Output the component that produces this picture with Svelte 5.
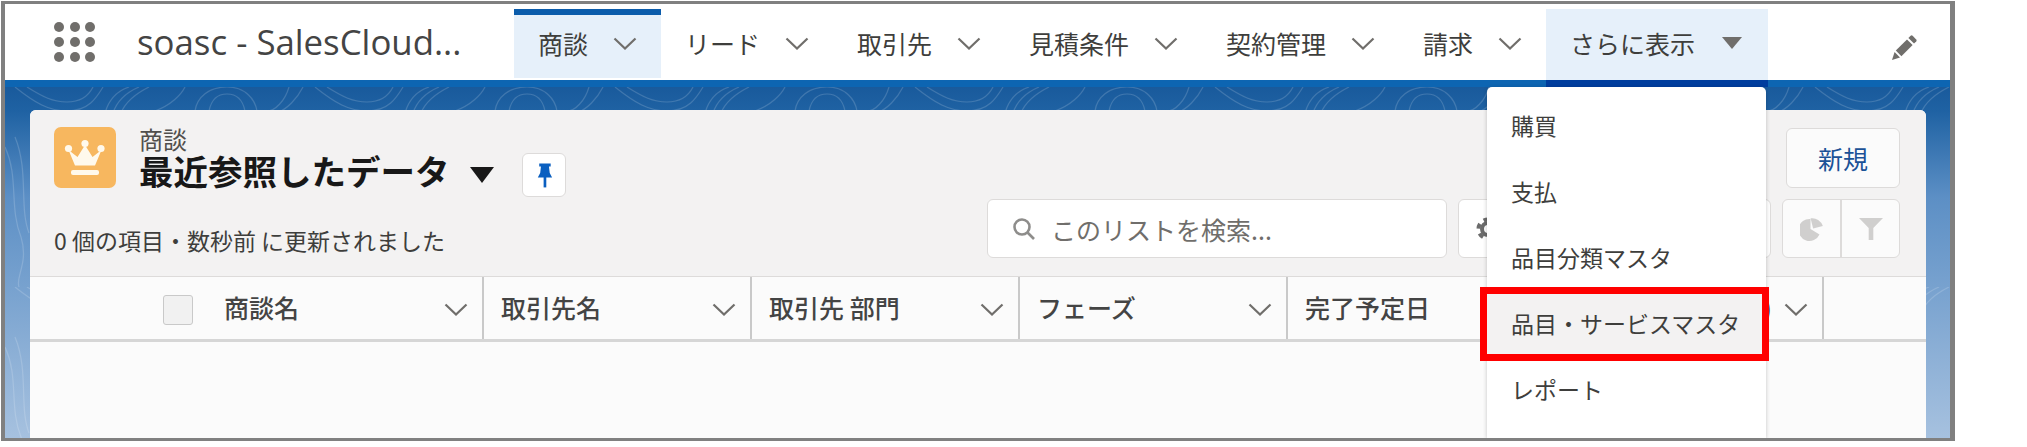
<script>
  const tabs = [
    { label: '商談', active: true },
    { label: 'リード' },
    { label: '取引先' },
    { label: '見積条件' },
    { label: '契約管理' },
    { label: '請求' }
  ];

  const columns = ['取引先名', '取引先 部門', 'フェーズ', '完了予定日'];

  const menuItems = ['購買', '支払', '品目分類マスタ', '品目・サービスマスタ', 'レポート'];
  const selectedItem = '品目・サービスマスタ';
</script>

{#snippet chevron()}
  <svg class="chevron" viewBox="0 0 24 13" aria-hidden="true">
    <path d="M1.5 1.5 L12 11.5 L22.5 1.5" />
  </svg>
{/snippet}

<div class="frame">
  <header class="topbar">
    <div class="launcher" aria-hidden="true">
      {#each Array(9) as _}
        <span></span>
      {/each}
    </div>
    <div class="app-name">soasc - SalesCloud...</div>
    <nav class="tabs">
      {#each tabs as tab}
        <div class="tab" class:active={tab.active}>
          <span>{tab.label}</span>
          {@render chevron()}
        </div>
      {/each}
      <div class="tab more">
        <span>さらに表示</span>
        <svg class="caret" viewBox="0 0 20 12" aria-hidden="true"><path d="M0 0 H20 L10 12 Z" /></svg>
      </div>
    </nav>
    <svg class="pencil" viewBox="0 0 28 28" aria-hidden="true">
      <path d="M2 26 L4.6 18 L10 23.4 Z" />
      <path d="M5.8 16.6 L17 5.4 L22.6 11 L11.4 22.2 Z" />
      <path d="M18.4 4 L20.6 1.8 A1.5 1.5 0 0 1 22.6 1.8 L26.2 5.4 A1.5 1.5 0 0 1 26.2 7.4 L24 9.6 Z" />
    </svg>
  </header>

  <main class="stage">
    <svg class="contours" aria-hidden="true">
      <defs>
        <pattern id="contour" width="300" height="200" patternUnits="userSpaceOnUse">
          <g fill="none" stroke="#fff" stroke-opacity="0.16" stroke-width="1.2">
            <path d="M10 0 C30 16 44 24 62 24 C84 24 92 10 98 0" />
            <path d="M22 0 C38 10 48 15 62 15 C76 15 84 8 88 0" />
            <path d="M100 26 C104 12 112 4 124 0 M108 26 C112 14 120 6 134 0 M116 26 C120 16 128 8 144 0" />
            <path d="M150 24 C166 18 176 8 180 0" />
            <path d="M190 24 C192 10 204 0 222 0 C240 0 250 12 252 24" />
            <path d="M204 24 C206 14 212 7 222 7 C232 7 238 14 240 24" />
            <path d="M262 24 C270 24 280 14 284 0 M272 26 C282 22 292 12 298 0" />
            <path d="M0 60 C14 90 4 120 16 150 C24 176 10 190 14 200" />
            <path d="M10 50 C24 84 14 120 24 146" />
          </g>
        </pattern>
      </defs>
      <rect width="100%" height="100%" fill="url(#contour)" />
    </svg>

    <section class="card">
      <div class="card-head">
        <div class="head-top">
          <div class="object-icon">
            <svg viewBox="0 0 62 61" aria-hidden="true">
              <circle cx="14.5" cy="21.5" r="3.6" />
              <circle cx="31" cy="16.5" r="3.6" />
              <circle cx="47" cy="21.5" r="3.6" />
              <path d="M14.5 23 L21 38.5 H41 L47.5 23 L38.5 30 L31 18 L23.5 30 Z" />
              <rect x="17" y="43" width="28" height="5" rx="2" />
            </svg>
          </div>
          <div class="titles">
            <div class="object-name">商談</div>
            <div class="title-row">
              <h1>最近参照したデータ</h1>
              <svg class="title-caret" viewBox="0 0 24 16" aria-hidden="true"><path d="M0 0 H24 L12 16 Z" /></svg>
              <button class="pin" aria-label="pin">
                <svg viewBox="0 0 44 44" aria-hidden="true">
                  <path d="M17 10 H29 V13 H27.2 L28 20 L30.5 24.5 H15.5 L18 20 L18.8 13 H17 Z" />
                  <rect x="21.6" y="24" width="2.8" height="11" />
                </svg>
              </button>
            </div>
          </div>
          <button class="new-btn">新規</button>
        </div>

        <div class="head-bottom">
          <div class="meta">0 個の項目・数秒前 に更新されました</div>
          <div class="search">
            <svg viewBox="0 0 24 24" aria-hidden="true">
              <circle cx="10" cy="10" r="7.5" />
              <path d="M15.5 15.5 L22 22" />
            </svg>
            <span>このリストを検索...</span>
          </div>
          <div class="settings">
            <svg viewBox="0 0 24 24" aria-hidden="true">
              <circle cx="12" cy="12" r="6" />
              <circle class="teeth" cx="12" cy="12" r="9.5" />
            </svg>
          </div>
          <div class="chart-group">
            <div class="tool">
              <svg viewBox="0 0 24 24" aria-hidden="true">
                <path d="M10.5 2 V12 L19.5 17.5 A11 11 0 1 1 10.5 2 Z" />
                <path d="M13 1 A11 11 0 0 1 23 11.5 L13 11.5 Z" transform="rotate(-14 13 11)" />
              </svg>
            </div>
            <div class="tool">
              <svg viewBox="0 0 26 24" aria-hidden="true"><path d="M0 0 H26 L15.5 11 V24 H10.5 V11 Z" /></svg>
            </div>
          </div>
        </div>
      </div>

      <div class="table-head">
        <div class="col first">
          <span class="checkbox"></span>
          <span class="label">商談名</span>
          {@render chevron()}
        </div>
        {#each columns as col}
          <div class="col">
            <span class="label">{col}</span>
            {@render chevron()}
          </div>
        {/each}
        <div class="col amount">
          <span class="label">金額 (千円)</span>
          {@render chevron()}
        </div>
        <div class="col rest"></div>
      </div>
    </section>

    <ul class="menu">
      {#each menuItems as item}
        <li class:selected={item === selectedItem}>{item}</li>
      {/each}
    </ul>
  </main>
</div>

<style>
  :global(body) {
    background: #fff;
  }

  .frame {
    position: relative;
    display: flex;
    flex-direction: column;
    box-sizing: border-box;
    width: 1954px;
    height: 440px;
    margin: 1px 0 0 1px;
    border: 3px solid #808080;
    border-left-width: 4px;
    border-right-width: 5px;
    overflow: hidden;
    font-family: "Noto Sans CJK JP", "Noto Sans", sans-serif;
    color: #3e3e3c;
  }

  .topbar {
    flex: none;
    display: flex;
    box-sizing: content-box;
    height: 76px;
    background: #fff;
    border-bottom: 7px solid #0d65b2;
  }

  .launcher {
    display: grid;
    grid-template-columns: repeat(3, 10px);
    grid-auto-rows: 10px;
    gap: 5px 5.5px;
    align-self: center;
    margin: 0 0 0 49px;
  }

  .launcher span {
    border-radius: 50%;
    background: #706e6b;
  }

  .app-name {
    width: 377px;
    margin-left: 42px;
    align-self: center;
    font-family: "Open Sans", sans-serif;
    font-size: 34.8px;
    line-height: 40px;
    white-space: nowrap;
    color: #444;
  }

  .tabs {
    display: flex;
    margin-top: 5px;
  }

  .tab {
    display: flex;
    align-items: center;
    gap: 25px;
    padding: 0 24px;
    font-size: 25px;
    line-height: 36px;
    white-space: nowrap;
    box-sizing: border-box;
    height: 68px;
  }

  .tab.active {
    background: #e6f0fa;
    border-top: 6px solid #0b5cab;
    height: 69px;
    padding-bottom: 7px;
    background-clip: padding-box;
  }

  .tab.more {
    height: 78px;
    padding-bottom: 4px;
    background: #e6f0fa;
    border-bottom: 7px solid #003d9e;
    box-sizing: border-box;
  }

  .chevron {
    width: 24px;
    height: 13px;
    flex: none;
    fill: none;
    stroke: #706e6b;
    stroke-width: 2.2;
  }

  .caret {
    width: 20px;
    height: 12px;
    margin: 0 2px;
    fill: #706e6b;
  }

  .pencil {
    width: 28px;
    height: 28px;
    margin: 30px 32px 0 auto;
    fill: #706e6b;
  }

  .stage {
    position: relative;
    flex: 1;
    min-height: 0;
    padding: 23px 24px 0 25px;
    background: linear-gradient(180deg, #195a9c 0, #1f62a3 24px, #5c8fc5 110px, #a6c1df 100%);
  }

  .contours {
    position: absolute;
    inset: 0;
    width: 100%;
    height: 100%;
  }

  .card {
    position: relative;
    height: 100%;
    display: flex;
    flex-direction: column;
    background: #fbfbfb;
    border-radius: 6px 6px 0 0;
  }

  .card-head {
    flex: none;
    box-sizing: border-box;
    height: 166px;
    padding: 17px 26px 0 24px;
    background: #f3f2f2;
    border-radius: 6px 6px 0 0;
  }

  .head-top {
    display: flex;
    height: 72px;
  }

  .object-icon {
    width: 62px;
    height: 61px;
    border-radius: 7px;
    background: #f7b75f;
  }

  .object-icon svg {
    display: block;
    fill: #fff9ec;
  }

  .titles {
    margin-left: 23px;
  }

  .object-name {
    font-size: 24px;
    line-height: 24px;
    color: #514f4d;
  }

  .title-row {
    display: flex;
    align-items: flex-start;
  }

  h1 {
    margin: 0;
    font-size: 34.5px;
    line-height: 38px;
    font-weight: 700;
    color: #181818;
    white-space: nowrap;
  }

  .title-caret {
    width: 24px;
    height: 16px;
    margin: 16px 0 0 20px;
    fill: #181818;
  }

  .pin {
    width: 44px;
    height: 44px;
    margin: 2px 0 0 28px;
    padding: 0;
    background: #fff;
    border: 1px solid #dddbda;
    border-radius: 6px;
  }

  .pin svg {
    display: block;
    width: 42px;
    height: 42px;
    fill: #0a5fc0;
  }

  .new-btn {
    width: 114px;
    height: 60px;
    margin-left: auto;
    margin-top: 1px;
    padding: 0;
    background: #fbfbfb;
    border: 1px solid #dddbda;
    border-radius: 6px;
    font: inherit;
    font-size: 25px;
    color: #1b5297;
  }

  .head-bottom {
    display: flex;
    height: 59px;
  }

  .meta {
    flex: 1;
    align-self: flex-end;
    padding-bottom: 4px;
    font-size: 23px;
    line-height: 28px;
    white-space: nowrap;
  }

  .search {
    display: flex;
    align-items: center;
    gap: 15px;
    box-sizing: border-box;
    width: 460px;
    padding-left: 24px;
    background: #fff;
    border: 1px solid #dddbda;
    border-radius: 6px;
    font-size: 25px;
    color: #706e6b;
    white-space: nowrap;
  }

  .search svg {
    width: 24px;
    height: 24px;
    fill: none;
    stroke: #8e8d8b;
    stroke-width: 2.6;
  }

  .settings {
    display: flex;
    align-items: center;
    box-sizing: border-box;
    width: 313px;
    margin-left: 11px;
    padding-left: 17px;
    background: #fff;
    border: 1px solid #dddbda;
    border-radius: 6px;
  }

  .settings svg {
    width: 24px;
    height: 24px;
    fill: none;
    stroke: #6b6b6b;
    stroke-width: 4;
  }

  .teeth {
    stroke-dasharray: 5 5;
  }

  .chart-group {
    display: flex;
    box-sizing: border-box;
    width: 118px;
    margin-left: 11px;
    background: #fbfbfb;
    border: 1px solid #dddbda;
    border-radius: 6px;
  }

  .tool {
    flex: 1;
    display: flex;
    align-items: center;
    justify-content: center;
  }

  .tool + .tool {
    border-left: 2px solid #dddbda;
  }

  .tool svg {
    width: 24px;
    height: 24px;
    fill: #d0cfce;
  }

  .table-head {
    flex: none;
    display: grid;
    grid-template-columns: 454px repeat(5, 268px) 1fr;
    box-sizing: border-box;
    height: 66px;
    background: #fbfbfb;
    border-top: 1px solid #dddbda;
    border-bottom: 3px solid #d6d6d6;
  }

  .col {
    display: flex;
    align-items: center;
    box-sizing: border-box;
    padding: 0 14px 2px 17px;
    border-right: 2px solid #c9c9c9;
  }

  .col.first {
    padding-left: 133px;
  }

  .col.amount {
    justify-content: flex-end;
    gap: 12px;
  }

  .col.rest {
    border-right: 0;
  }

  .col .chevron {
    margin: 5px 0 0 auto;
  }

  .col.amount .chevron {
    margin-left: 0;
  }

  .checkbox {
    width: 30px;
    height: 30px;
    margin: 5px 31px 0 0;
    box-sizing: border-box;
    background: #f1f1f1;
    border: 1px solid #c9c9c9;
    border-radius: 3px;
  }

  .label {
    font-size: 25px;
    font-weight: 500;
    color: #444;
    white-space: nowrap;
  }

  .menu {
    position: absolute;
    top: 0;
    bottom: 0;
    left: 1482px;
    width: 279px;
    margin: 0;
    padding: 5px 0 0;
    list-style: none;
    box-sizing: border-box;
    background: #fff;
    border-radius: 5px 5px 0 0;
    box-shadow: 0 1px 4px rgba(0, 0, 0, 0.22);
  }

  .menu li {
    position: relative;
    height: 66px;
    padding-left: 24px;
    font-size: 23px;
    line-height: 66px;
    white-space: nowrap;
  }

  .menu li.selected {
    background: #f3f2f2;
  }

  /* red annotation box around the highlighted entry */
  .menu li.selected::after {
    content: "";
    position: absolute;
    top: -3px;
    right: -3px;
    bottom: -5px;
    left: -7px;
    border: 7px solid #f00;
  }
</style>
